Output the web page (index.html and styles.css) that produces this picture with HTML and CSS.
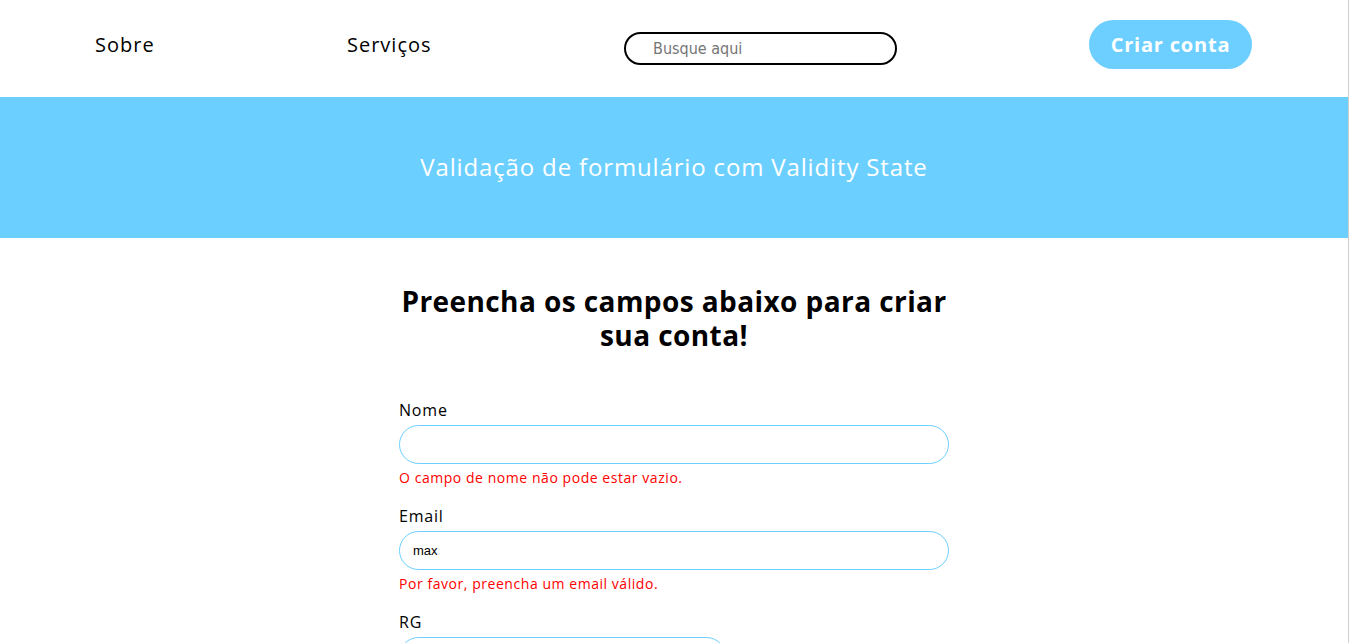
FILE: index.html
```html
<!DOCTYPE html>
<html lang="pt-BR">
<head>
<meta charset="utf-8">
<title>Validação de formulário</title>
<link rel="stylesheet" href="styles.css">
</head>
<body>
<header class="topbar">
  <a class="nav-link" href="#">Sobre</a>
  <a class="nav-link" href="#">Serviços</a>
  <input class="search" type="text" placeholder="Busque aqui">
  <a class="btn-create" href="#">Criar conta</a>
</header>
<section class="banner">
  <p class="banner-title">Validação de formulário com Validity State</p>
</section>
<main class="form-wrap">
  <h1 class="form-title">Preencha os campos abaixo para criar sua conta!</h1>
  <form class="form">
    <div class="field">
      <label class="field-label">Nome</label>
      <input class="field-input" type="text">
      <span class="field-error">O campo de nome não pode estar vazio.</span>
    </div>
    <div class="field">
      <label class="field-label">Email</label>
      <input class="field-input" type="text" value="max">
      <span class="field-error">Por favor, preencha um email válido.</span>
    </div>
    <div class="field">
      <label class="field-label">RG</label>
      <input class="field-input field-input--short" type="text">
    </div>
  </form>
</main>
</body>
</html>
```
FILE: styles.css
```css
* { box-sizing: border-box; }
html, body { margin: 0; padding: 0; }
body {
  font-family: "Open Sans", "DejaVu Sans", sans-serif;
  color: #000;
  background: #fff;
  border-right: 1px solid #cfcfcf;
  min-height: 643px;
  overflow: hidden;
}
.topbar {
  height: 97px;
  display: grid;
  grid-template-columns: 252px 277px 465px auto;
  align-items: center;
  padding-left: 95px;
}
.nav-link {
  color: #000;
  text-decoration: none;
  font-size: 20px;
  letter-spacing: 1px;
  margin-top: -8px;
}
.search {
  width: 273px;
  height: 33px;
  border: 2px solid #000;
  border-radius: 17px;
  padding: 0 0 0 27px;
  font-family: "Liberation Sans Narrow", "DejaVu Sans Condensed", sans-serif;
  font-size: 16px;
  margin-top: 0;
  outline: none;
}
.search::placeholder { color: #757575; }
.btn-create {
  width: 163px;
  height: 49px;
  border-radius: 25px;
  background: #6ccfff;
  color: #fff;
  font-weight: 700;
  font-size: 20px;
  letter-spacing: 0.8px;
  text-decoration: none;
  display: flex;
  align-items: center;
  justify-content: center;
  margin-top: -8px;
}
.banner {
  height: 141px;
  background: #6bd0ff;
  display: flex;
  align-items: center;
  justify-content: center;
}
.banner-title {
  margin: 0 0 2px;
  color: #fff;
  font-size: 24px;
  letter-spacing: 0.85px;
}
.form-wrap {
  width: 550px;
  margin: 0 auto;
}
.form-title {
  margin: 46px 0 0;
  text-align: center;
  font-size: 28px;
  line-height: 34px;
  font-weight: 700;
  letter-spacing: 0.42px;
}
.form { margin-top: 46px; }
.field {
  display: flex;
  flex-direction: column;
  margin-bottom: 16px;
}
.field-label {
  font-size: 16px;
  line-height: 22px;
  letter-spacing: 0.8px;
  margin: 1px 0 4px;
}
.field-input {
  height: 39px;
  border: 1px solid #6ccfff;
  border-radius: 20px;
  padding: 0 13px;
  font-size: 13px;
  font-family: "Liberation Sans", "DejaVu Sans", sans-serif;
  outline: none;
}
.field-input--short { width: 327px; }
.field-error {
  color: #ff0000;
  font-size: 14px;
  line-height: 20px;
  letter-spacing: 0.55px;
  margin-top: 4px;
}
```
